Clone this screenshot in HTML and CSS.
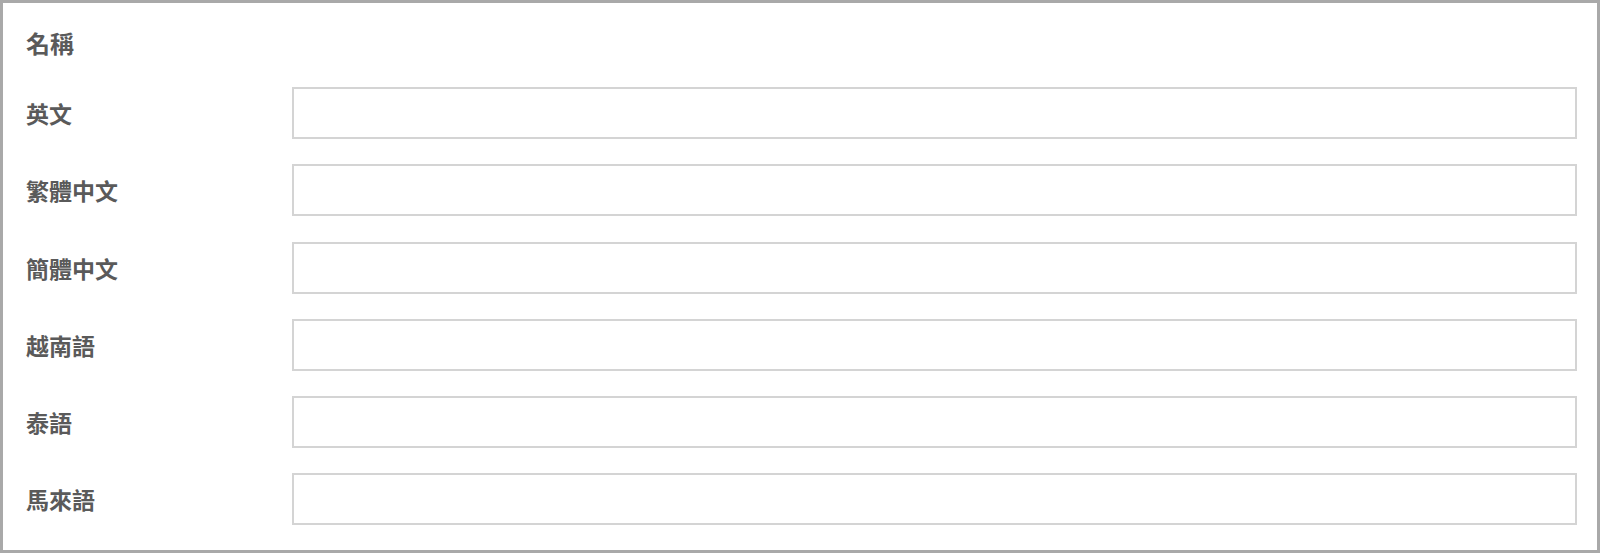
FILE: index.html
```html
<!DOCTYPE html>
<html lang="zh-Hant">
<head>
    <meta charset="UTF-8">
    <meta name="viewport" content="width=device-width, initial-scale=1.0">
    <title>名稱</title>
    <link rel="stylesheet" href="styles.css">
</head>
<body>
    <div class="panel">
        <h3 class="panel-title">名稱</h3>

        <div class="field">
            <label for="nameEn">英文</label>
            <input type="text" id="nameEn">
        </div>
        <div class="field">
            <label for="nameTw">繁體中文</label>
            <input type="text" id="nameTw">
        </div>
        <div class="field">
            <label for="nameCn">簡體中文</label>
            <input type="text" id="nameCn">
        </div>
        <div class="field">
            <label for="nameVi">越南語</label>
            <input type="text" id="nameVi">
        </div>
        <div class="field">
            <label for="nameTh">泰語</label>
            <input type="text" id="nameTh">
        </div>
        <div class="field">
            <label for="nameMs">馬來語</label>
            <input type="text" id="nameMs">
        </div>
    </div>
</body>
</html>
```

FILE: styles.css
```css
body {
    margin: 0;
    background: #fff;
    font-family: "Noto Sans CJK TC", "Noto Sans", sans-serif;
    color: #5a5a5a;
}
.panel {
    box-sizing: border-box;
    height: 553px;
    border: 3px solid #a9a9a9;
    padding: 23px 20px 0 23px;
    display: flex;
    flex-direction: column;
    gap: 25.2px;
}
.panel-title {
    margin: 0 0 2px;
    font-size: 24px;
    line-height: 34px;
    font-weight: 700;
}
.field {
    display: flex;
    align-items: center;
}
.field label {
    width: 266px;
    flex-shrink: 0;
    font-size: 23px;
    font-weight: 700;
}
.field input {
    flex: 1;
    box-sizing: border-box;
    height: 52px;
    border: 2px solid #d4d4d4;
    border-radius: 0;
    outline: none;
    padding: 0 12px;
    font-size: 18px;
    font-family: inherit;
}
```
